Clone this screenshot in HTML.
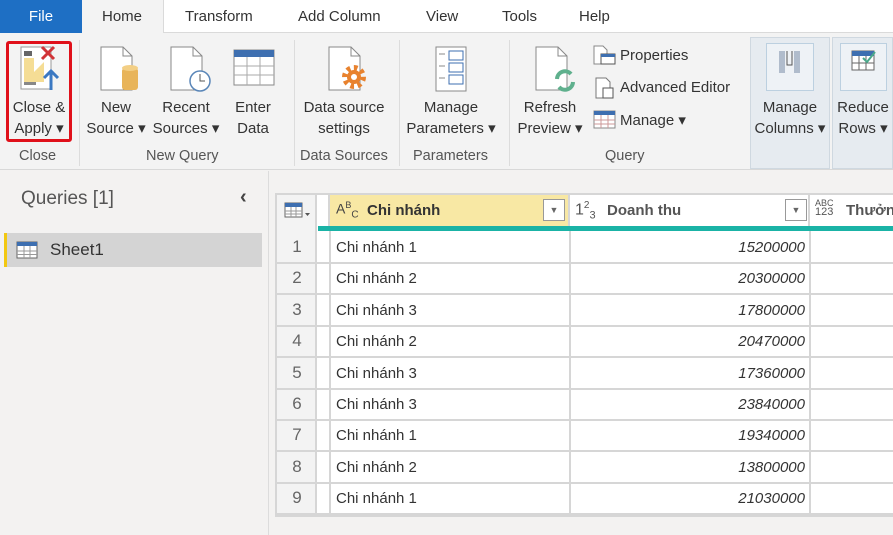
<!DOCTYPE html>
<html><head><meta charset="utf-8"><style>
*{margin:0;padding:0;box-sizing:border-box}
body{width:893px;height:535px;overflow:hidden;background:#f3f2f1;font-family:"Liberation Sans",sans-serif;color:#333;position:relative;font-size:15px}
.a{position:absolute;white-space:nowrap}
.tab{top:8px;font-size:15px;color:#333}
.lbl{font-size:15px;color:#333;text-align:center;line-height:21px}
.grp{top:148px;font-size:14.5px;color:#555}
.sep{position:absolute;top:40px;width:1px;height:126px;background:#dcdcdc}
.cell{position:absolute;height:31px;border-bottom:2px solid #d6d6d6;background:#fff}
</style></head><body>
<!-- tab bar -->
<div class="a" style="left:0;top:0;width:893px;height:33px;background:#fff;border-bottom:1px solid #dadada"></div>
<div class="a" style="left:0;top:0;width:82px;height:33px;background:#1e6fc4;color:#fff;font-size:15px;text-align:center;line-height:33px">File</div>
<div class="a" style="left:82px;top:0;width:82px;height:34px;background:#f3f3f3;border-right:1px solid #dadada"></div>
<div class="a tab" style="left:102px">Home</div>
<div class="a tab" style="left:185px">Transform</div>
<div class="a tab" style="left:298px">Add Column</div>
<div class="a tab" style="left:426px">View</div>
<div class="a tab" style="left:502px">Tools</div>
<div class="a tab" style="left:579px">Help</div>
<!-- ribbon -->
<div class="a" style="left:0;top:33px;width:893px;height:137px;background:#f3f3f3;border-bottom:1px solid #d8d8d8"></div>
<div class="a" style="left:750px;top:37px;width:80px;height:132px;background:#e6ebf0;border:1px solid #cfd8e0"></div>
<div class="a" style="left:832px;top:37px;width:61px;height:132px;background:#e6ebf0;border:1px solid #cfd8e0"></div>
<div class="sep" style="left:79px"></div><div class="sep" style="left:294px"></div><div class="sep" style="left:399px"></div><div class="sep" style="left:509px"></div>
<!-- close & apply -->
<div class="a" style="left:6px;top:41px;width:66px;height:101px;border:3px solid #e0101a;border-radius:3px"></div>
<svg class="a" style="left:20px;top:44px" width="40" height="48"><rect x="1" y="3" width="30" height="42" fill="#fff" stroke="#999"/><rect x="4" y="7" width="8" height="5" fill="#666"/><rect x="4" y="36" width="12" height="5" fill="#888"/><path d="M4 14h10v14l10-10v20H4z" fill="#f5dd95"/><path d="M22 3l12 12M34 3L22 15" stroke="#d13438" stroke-width="3"/><path d="M31 46V28M24 34l7-7 7 7" stroke="#3b78c2" stroke-width="3" fill="none"/></svg>
<div class="a lbl" style="left:8px;top:97px;width:62px">Close &amp;<br>Apply ▾</div>
<div class="a grp" style="left:19px">Close</div>
<!-- new source -->
<svg class="a" style="left:98px;top:46px" width="44" height="46"><path d="M3 1h22l9 9v34H3z" fill="#fff" stroke="#888"/><path d="M25 1v9h9" fill="none" stroke="#888"/><rect x="24" y="22" width="16" height="22" rx="3" fill="#e8b45a"/><ellipse cx="32" cy="22" rx="8" ry="3" fill="#f3cf85"/></svg>
<div class="a lbl" style="left:86px;top:97px;width:60px">New<br>Source ▾</div>
<svg class="a" style="left:168px;top:46px" width="44" height="46"><path d="M3 1h22l9 9v34H3z" fill="#fff" stroke="#888"/><path d="M25 1v9h9" fill="none" stroke="#888"/><circle cx="32" cy="35" r="10" fill="#fff" stroke="#5a86b8" stroke-width="1.5"/><path d="M32 28v7h5" stroke="#555" fill="none"/></svg>
<div class="a lbl" style="left:150px;top:97px;width:72px">Recent<br>Sources ▾</div>
<svg class="a" style="left:233px;top:49px" width="42" height="38"><rect x="1" y="1" width="40" height="35" fill="#fff" stroke="#888"/><rect x="1" y="1" width="40" height="7" fill="#3e6fb0"/><path d="M1 17h40M1 26h40M14 8v28M27 8v28" stroke="#aaa"/></svg>
<div class="a lbl" style="left:228px;top:97px;width:50px">Enter<br>Data</div>
<!-- data source settings -->
<svg class="a" style="left:326px;top:46px" width="44" height="46"><path d="M3 1h22l9 9v34H3z" fill="#fff" stroke="#888"/><path d="M25 1v9h9" fill="none" stroke="#888"/><circle cx="28" cy="31" r="9" fill="none" stroke="#e8822e" stroke-width="6" stroke-dasharray="3.5 3.5"/><circle cx="28" cy="31" r="7" fill="#e8822e"/><circle cx="28" cy="31" r="3" fill="#fff"/></svg>
<div class="a lbl" style="left:298px;top:97px;width:92px">Data source<br>settings</div>
<div class="a grp" style="left:300px">Data Sources</div>
<!-- manage params -->
<svg class="a" style="left:435px;top:46px" width="34" height="46"><rect x="1" y="1" width="30" height="44" fill="#fff" stroke="#888"/><path d="M4 8h6M4 20h6M4 32h6" stroke="#888"/><rect x="14" y="5" width="14" height="9" fill="#fff" stroke="#3e6fb0"/><rect x="14" y="17" width="14" height="9" fill="#fff" stroke="#3e6fb0"/><rect x="14" y="29" width="14" height="9" fill="#fff" stroke="#3e6fb0"/></svg>
<div class="a lbl" style="left:404px;top:97px;width:94px">Manage<br>Parameters ▾</div>
<div class="a grp" style="left:413px">Parameters</div>
<!-- refresh -->
<svg class="a" style="left:533px;top:46px" width="46" height="48"><path d="M3 1h22l9 9v34H3z" fill="#fff" stroke="#888"/><path d="M25 1v9h9" fill="none" stroke="#888"/><path d="M24 33a8 8 0 0 1 14-5M40 36a8 8 0 0 1-14 5" stroke="#5fb08d" stroke-width="4" fill="none"/></svg>
<div class="a lbl" style="left:514px;top:97px;width:72px">Refresh<br>Preview ▾</div>
<svg class="a" style="left:593px;top:45px" width="24" height="20"><path d="M1 1h9l4 4v14H1z" fill="#fff" stroke="#888"/><rect x="8" y="9" width="14" height="10" fill="#fff" stroke="#555"/><rect x="8" y="9" width="14" height="3" fill="#3e6fb0"/></svg>
<div class="a" style="left:620px;top:47px;font-size:15px">Properties</div>
<svg class="a" style="left:595px;top:77px" width="22" height="22"><path d="M1 1h10l4 4v16H1z" fill="#fff" stroke="#777"/><rect x="8" y="11" width="10" height="10" fill="#fff" stroke="#555"/></svg>
<div class="a" style="left:620px;top:79px;font-size:15px">Advanced Editor</div>
<svg class="a" style="left:593px;top:110px" width="24" height="20"><rect x="1" y="1" width="21" height="17" fill="#fff" stroke="#888"/><rect x="1" y="1" width="21" height="4" fill="#3e6fb0"/><path d="M1 10h21M1 14h21M8 5v13M15 5v13" stroke="#c99"/></svg>
<div class="a" style="left:620px;top:111px;font-size:15px">Manage ▾</div>
<div class="a grp" style="left:605px">Query</div>
<!-- manage columns -->
<div class="a" style="left:766px;top:43px;width:48px;height:48px;border:1px solid #bcd0e0;background:#eef2f6"></div>
<svg class="a" style="left:778px;top:50px" width="24" height="26"><rect x="1" y="1" width="6" height="22" fill="#b0bccc"/><rect x="16" y="1" width="6" height="22" fill="#b0bccc"/><path d="M9 1v14h5V1" stroke="#555" fill="none"/></svg>
<div class="a lbl" style="left:752px;top:97px;width:76px">Manage<br>Columns ▾</div>
<div class="a" style="left:840px;top:43px;width:47px;height:48px;border:1px solid #bcd0e0;background:#eef2f6"></div>
<svg class="a" style="left:851px;top:50px" width="26" height="24"><rect x="1" y="1" width="22" height="19" fill="#fff" stroke="#666"/><rect x="1" y="1" width="22" height="5" fill="#3e6fb0"/><path d="M1 13h22M8 6v14M15 6v14" stroke="#666"/><path d="M12 8l4 4 8-10" stroke="#4aa88a" stroke-width="2" fill="none"/></svg>
<div class="a lbl" style="left:834px;top:97px;width:58px">Reduce<br>Rows ▾</div>
<div class="a grp" style="left:146px">New Query</div>
<!-- left panel -->
<div class="a" style="left:268px;top:171px;width:1px;height:364px;background:#dcdcdc"></div>
<div class="a" style="left:21px;top:188px;font-size:19px;color:#555">Queries [1]</div>
<div class="a" style="left:240px;top:186px;font-size:20px;color:#444;font-weight:bold">‹</div>
<div class="a" style="left:4px;top:233px;width:258px;height:34px;background:#d4d4d4;border-left:3px solid #f2c811"></div>
<svg class="a" style="left:16px;top:241px" width="22" height="18"><rect x="1" y="1" width="20" height="16" fill="#fff" stroke="#666"/><rect x="1" y="1" width="20" height="4" fill="#3e6fb0"/><path d="M1 10h20M1 13.5h20M8 5v12M14 5v12" stroke="#999"/></svg>
<div class="a" style="left:50px;top:240px;font-size:17px;color:#333">Sheet1</div>
<!-- table -->
<div class="a" style="left:275px;top:193px;width:618px;height:324px;background:#fff;border:2px solid #d6d6d6;border-right:none"></div>
<div class="a" style="left:277px;top:195px;width:40px;height:320px;background:#f3f3f3;border-right:2px solid #d6d6d6"></div>
<svg class="a" style="left:284px;top:202px" width="28" height="18"><rect x="1" y="1" width="17" height="14" fill="#fff" stroke="#666"/><rect x="1" y="1" width="17" height="4" fill="#3e6fb0"/><path d="M1 9h17M1 12h17M7 5v10M12 5v10" stroke="#999"/><path d="M21 11h5l-2.5 3z" fill="#555"/></svg>
<div class="a" style="left:318px;top:195px;width:12px;height:31px;border-right:2px solid #d6d6d6"></div>
<div class="a" style="left:330px;top:195px;width:240px;height:31px;background:#f8e8a4;border-right:2px solid #d6d6d6"></div>
<div class="a" style="left:336px;top:200px;font-size:14px;color:#444">A<sup style="font-size:9px">B</sup><sub style="font-size:10px">C</sub></div>
<div class="a" style="left:367px;top:202px;font-size:15px;font-weight:bold;color:#333">Chi nhánh</div>
<div class="a" style="left:543px;top:199px;width:22px;height:22px;border:1px solid #999;background:#fff;font-size:9px;text-align:center;line-height:20px;color:#666">▼</div>
<div class="a" style="left:575px;top:200px;font-size:16px;color:#555">1<sup style="font-size:10px">2</sup><sub style="font-size:11px">3</sub></div>
<div class="a" style="left:607px;top:202px;font-size:15px;font-weight:bold;color:#555">Doanh thu</div>
<div class="a" style="left:785px;top:199px;width:22px;height:22px;border:1px solid #999;background:#fff;font-size:9px;text-align:center;line-height:20px;color:#666">▼</div>
<div class="a" style="left:570px;top:195px;width:240px;height:31px;border-right:2px solid #d6d6d6"></div>
<div class="a" style="left:815px;top:199px;font-size:9px;line-height:9px;color:#555">ABC<br><span style="font-size:11px">123</span></div>
<div class="a" style="left:846px;top:202px;font-size:15px;font-weight:bold;color:#555">Thưởn</div>
<div class="a" style="left:318px;top:226px;width:575px;height:5px;background:#1ab3a6"></div>
<div id="rows"></div>
<script>
var d=[["1","Chi nhánh 1","15200000"],["2","Chi nhánh 2","20300000"],["3","Chi nhánh 3","17800000"],["4","Chi nhánh 2","20470000"],["5","Chi nhánh 3","17360000"],["6","Chi nhánh 3","23840000"],["7","Chi nhánh 1","19340000"],["8","Chi nhánh 2","13800000"],["9","Chi nhánh 1","21030000"]];
var h="";
for(var i=0;i<9;i++){var t=Math.round(231+i*31.4);
h+='<div class="a" style="left:277px;top:'+(t+31)+'px;width:616px;height:2px;background:#d6d6d6"></div>';
h+='<div class="a" style="left:277px;top:'+(t+6)+'px;width:40px;text-align:center;font-size:17px;color:#666">'+d[i][0]+'</div>';
h+='<div class="a" style="left:336px;top:'+(t+8)+'px;font-size:15px;color:#333">'+d[i][1]+'</div>';
h+='<div class="a" style="left:570px;top:'+(t+8)+'px;width:235px;text-align:right;font-size:15px;font-style:italic;color:#333">'+d[i][2]+'</div>';}
h+='<div class="a" style="left:329px;top:231px;width:2px;height:285px;background:#d6d6d6"></div>';
h+='<div class="a" style="left:569px;top:231px;width:2px;height:285px;background:#d6d6d6"></div>';
h+='<div class="a" style="left:809px;top:231px;width:2px;height:285px;background:#d6d6d6"></div>';
document.getElementById("rows").innerHTML=h;
</script>
</body></html>
